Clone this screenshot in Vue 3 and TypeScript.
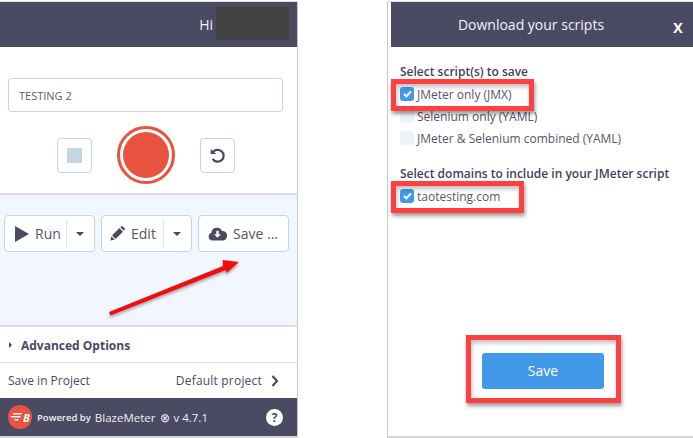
<script setup lang="ts">
const scripts = [
  { label: 'JMeter only (JMX)', checked: true },
  { label: 'Selenium only (YAML)', checked: false },
  { label: 'JMeter & Selenium combined (YAML)', checked: false },
]
</script>

<template>
  <div class="page">
    <section class="panel recorder">
      <header class="top">
        <span class="hi">Hi</span>
        <span class="redacted"></span>
      </header>

      <div class="record-area">
        <input class="name" value="TESTING 2" />
        <div class="controls">
          <button class="square"><span class="stop"></span></button>
          <div class="record"><span></span></div>
          <button class="square">
            <svg width="17" height="17" viewBox="0 0 16 16" fill="none">
              <path d="M3.2 5.6A5.6 5.6 0 1 1 3.4 11.2" stroke="#4a4a63" stroke-width="2.1" />
              <path d="M1.6 1.8 6.8 6.6 1.6 6.6Z" fill="#4a4a63" />
            </svg>
          </button>
        </div>
      </div>

      <div class="actions">
        <div class="btn-row">
          <div class="btn split">
            <svg width="14" height="16" viewBox="0 0 14 16"><path d="M0 0 14 8 0 16Z" fill="#4a4a63" /></svg>
            <span class="label">Run</span>
            <span class="sep"></span>
            <span class="caret"></span>
          </div>
          <div class="btn split edit">
            <svg width="15" height="15" viewBox="0 0 16 16" fill="#4a4a63">
              <path d="M0.5 15.5 1.4 11 5 14.6Z" />
              <path d="M2.2 10 10 2.2 13.8 6 6 13.8Z" />
              <path d="M11 1.2 12 0.4C12.5 0 13 0 13.5 0.4L15.6 2.5C16 3 16 3.5 15.6 4L14.8 5Z" />
            </svg>
            <span class="label">Edit</span>
            <span class="sep"></span>
            <span class="caret"></span>
          </div>
          <div class="btn save">
            <svg width="19" height="15" viewBox="0 0 19 15">
              <path d="M4.4 14.5A4 4 0 0 1 3.4 6.7 5.6 5.6 0 0 1 14 4.9 4.8 4.8 0 0 1 14.6 14.5Z" fill="#4a4a63" />
              <path d="M8.3 4.8h2.4v3.4h2.2L9.5 11.8 6.1 8.2h2.2Z" fill="#fff" />
            </svg>
            <span class="label">Save ...</span>
          </div>
        </div>
      </div>

      <div class="row advanced">
        <span class="tri"></span>
        <strong>Advanced Options</strong>
      </div>
      <div class="row project">
        <span>Save in Project</span>
        <span class="default">
          Default project
          <svg width="8" height="12" viewBox="0 0 8 12" fill="none">
            <path d="M1.5 1 6 6 1.5 11" stroke="#4a4a63" stroke-width="2.2" />
          </svg>
        </span>
      </div>

      <footer class="bottom">
        <span class="logo">
          <svg width="13" height="8" viewBox="0 0 13 8" fill="#fff">
            <path d="M3 0H12L11 1.5H3ZM0 3H11L10 4.5H2ZM4 6H9L8 7.5H5Z" />
          </svg>
          <em>B</em>
        </span>
        <span class="powered">Powered by</span>
        <span class="brand">BlazeMeter</span>
        <span class="version">⊗ v 4.7.1</span>
        <span class="help">?</span>
      </footer>
    </section>

    <section class="panel download">
      <header class="top dl-top">
        <span>Download your scripts</span>
        <span class="close">x</span>
      </header>
      <div class="dl-body">
        <h4>Select script(s) to save</h4>
        <label v-for="s in scripts" :key="s.label" class="check">
          <span class="box" :class="{ on: s.checked }">
            <svg v-if="s.checked" width="9" height="8" viewBox="0 0 9 8" fill="none">
              <path d="M1 4 3.4 6.3 8 1.4" stroke="#fff" stroke-width="2" />
            </svg>
          </span>
          {{ s.label }}
        </label>
        <h4 class="second">Select domains to include in your JMeter script</h4>
        <label class="check">
          <span class="box on">
            <svg width="9" height="8" viewBox="0 0 9 8" fill="none">
              <path d="M1 4 3.4 6.3 8 1.4" stroke="#fff" stroke-width="2" />
            </svg>
          </span>
          taotesting.com
        </label>
        <button class="primary">Save</button>
      </div>
    </section>

    <!-- annotations drawn over the screenshot -->
    <svg class="arrow" width="150" height="70" viewBox="0 0 150 70">
      <defs>
        <filter id="arrow-shadow" x="-10%" y="-20%" width="120%" height="150%">
          <feDropShadow dx="0" dy="2" stdDeviation="1.5" flood-color="#000" flood-opacity="0.35" />
        </filter>
      </defs>
      <path
        d="M9 58 10.5 61.5 125.7 16 126.7 19 139 8 122.7 6 123 12Z"
        fill="#f00d0d"
        filter="url(#arrow-shadow)"
      />
    </svg>
    <div class="mark mark-jmx"></div>
    <div class="mark mark-domain"></div>
    <div class="mark mark-save"></div>
  </div>
</template>

<style scoped>
.page {
  position: relative;
  display: flex;
  justify-content: space-between;
  width: 693px;
  height: 438px;
  padding-top: 2px;
  box-sizing: border-box;
  background: #fff;
  overflow: hidden;
  font-family: "Open Sans", "Noto Sans", sans-serif;
  color: #4a4a63;
}

.panel {
  display: flex;
  flex-direction: column;
  background: #fff;
  box-sizing: border-box;
  box-shadow: 0 -1px 0 #dcdcdc;
}

.recorder {
  width: 298px;
  border-right: 1px solid #c9c9c9;
  border-bottom: 2px solid #d4d4d4;
}

.top {
  flex: none;
  height: 45px;
  background: #4a4a63;
  color: #f2f2f5;
  display: flex;
  align-items: center;
  justify-content: flex-end;
  box-sizing: border-box;
}

.hi {
  font-size: 14px;
}

.redacted {
  width: 73px;
  height: 33px;
  margin: 0 8px 3px 3px;
  background: #424242;
}

.record-area {
  height: 148px;
  flex: none;
  box-sizing: border-box;
  padding: 31px 14px 0 8px;
  border-bottom: 2px solid #dedede;
}

.name {
  display: block;
  width: 100%;
  height: 34px;
  box-sizing: border-box;
  padding: 1px 10px 0;
  border: 1px solid #c3d6e2;
  border-radius: 3px;
  font: 11px "Open Sans", sans-serif;
  color: #5a5a70;
  outline: none;
}

.controls {
  display: flex;
  align-items: center;
  justify-content: center;
  gap: 25px;
  margin-top: 14px;
}

.square {
  width: 35px;
  height: 35px;
  padding: 0;
  display: flex;
  align-items: center;
  justify-content: center;
  background: #fff;
  border: 1px solid #c3d6e2;
  border-radius: 4px;
}

.stop {
  width: 15px;
  height: 15px;
  background: #c3d6e2;
}

.record {
  width: 58px;
  height: 58px;
  box-sizing: border-box;
  border: 3px solid #ea5240;
  border-radius: 50%;
  padding: 3px;
}

.record span {
  display: block;
  width: 100%;
  height: 100%;
  border-radius: 50%;
  background: #ea5240;
}

.actions {
  height: 132px;
  flex: none;
  box-sizing: border-box;
  padding: 20px 0 0 4px;
  background: #f2f6fe;
  border-bottom: 2px solid #dedede;
}

.btn-row {
  display: flex;
  gap: 6px;
}

.btn {
  height: 37px;
  box-sizing: border-box;
  width: 91px;
  display: flex;
  align-items: center;
  background: #fff;
  border: 1px solid #c3d6e2;
  border-radius: 4px;
  padding-left: 10px;
  font-size: 14px;
  font-weight: 500;
  color: #55556c;
}

.edit {
  padding-left: 8px;
}

.label {
  margin-left: 6px;
  white-space: nowrap;
}

.sep {
  width: 1px;
  height: 28px;
  margin-left: auto;
  background: #dfe6eb;
}

.caret {
  width: 0;
  height: 0;
  margin: 0 10px 0 9px;
  border: 4px solid transparent;
  border-top-color: #4a4a63;
  border-bottom: 0;
}

.save {
  padding-left: 9px;
}

.row {
  flex: none;
  display: flex;
  align-items: center;
  box-sizing: border-box;
  font-size: 12px;
}

.advanced {
  height: 36px;
  padding: 1px 0 0 9px;
  border-bottom: 1px solid #dedede;
}

.advanced strong {
  font-weight: 700;
  margin-left: 9px;
  font-size: 12px;
}

.tri {
  width: 0;
  height: 0;
  border: 3.5px solid transparent;
  border-left-color: #4a4a63;
  border-right: 0;
}

.project {
  height: 35px;
  padding: 0 18px 0 8px;
  justify-content: space-between;
}

.default {
  display: flex;
  align-items: center;
  gap: 9px;
  letter-spacing: 0.2px;
}

.bottom {
  flex: none;
  height: 38px;
  display: flex;
  align-items: center;
  padding: 0 14px 0 8px;
  background: #4a4a63;
  color: #f0f0f4;
}

.logo {
  width: 24px;
  height: 24px;
  flex: none;
  display: flex;
  align-items: center;
  justify-content: center;
  border-radius: 50%;
  background: #ea5240;
  color: #fff;
}

.logo em {
  font-size: 11px;
  font-weight: 700;
  line-height: 1;
}

.powered {
  margin-left: 5px;
  font-size: 9.5px;
  font-weight: 600;
}

.brand {
  margin-left: 4px;
  font-size: 11.5px;
}

.version {
  margin-left: 5px;
  font-size: 11.5px;
  font-weight: 500;
}

.help {
  width: 17px;
  height: 17px;
  margin-left: auto;
  display: flex;
  align-items: center;
  justify-content: center;
  border-radius: 50%;
  background: #fff;
  color: #4a4a63;
  font-size: 12px;
  font-weight: 700;
}

.download {
  width: 306px;
  border-left: 1px solid #c9c9c9;
  border-bottom: 2px solid #d4d4d4;
  padding-left: 3px;
}

.dl-top {
  position: relative;
  justify-content: center;
  padding-right: 22px;
  font-size: 14px;
}

.close {
  position: absolute;
  right: 10px;
  top: 13px;
  font-size: 18px;
  line-height: 22px;
  font-weight: 600;
  color: #fff;
}

.dl-body {
  flex: 1;
  display: flex;
  flex-direction: column;
  padding: 17px 0 0 9px;
  font-size: 12px;
}

h4 {
  margin: 0 0 3px;
  font-size: 12px;
  font-weight: 600;
  line-height: 16px;
  color: #3f3f5c;
}

.second {
  margin-top: 17px;
}

.check {
  display: flex;
  align-items: center;
  gap: 3px;
  height: 22px;
  color: #55556c;
}

.box {
  width: 14px;
  height: 14px;
  flex: none;
  display: flex;
  align-items: center;
  justify-content: center;
  border-radius: 3px;
  background: #eef3fb;
}

.box.on {
  background: #4299e8;
}

.primary {
  width: 122px;
  height: 36px;
  margin: 146px 0 0 82px;
  padding: 0 0 2px;
  border: 0;
  border-radius: 3px;
  background: #4299e8;
  color: #fff;
  font: 500 14px "Open Sans", sans-serif;
}

.arrow {
  position: absolute;
  left: 100px;
  top: 254px;
}

.mark {
  position: absolute;
  box-sizing: border-box;
  border: 5px solid #ff4040;
  box-shadow: 1px 3px 4px rgba(0, 0, 0, 0.4), inset 1px 3px 4px rgba(0, 0, 0, 0.25);
}

.mark-jmx {
  left: 391px;
  top: 79px;
  width: 143px;
  height: 32px;
}

.mark-domain {
  left: 391px;
  top: 181px;
  width: 133px;
  height: 32px;
}

.mark-save {
  left: 466px;
  top: 335px;
  width: 155px;
  height: 68px;
}
</style>
